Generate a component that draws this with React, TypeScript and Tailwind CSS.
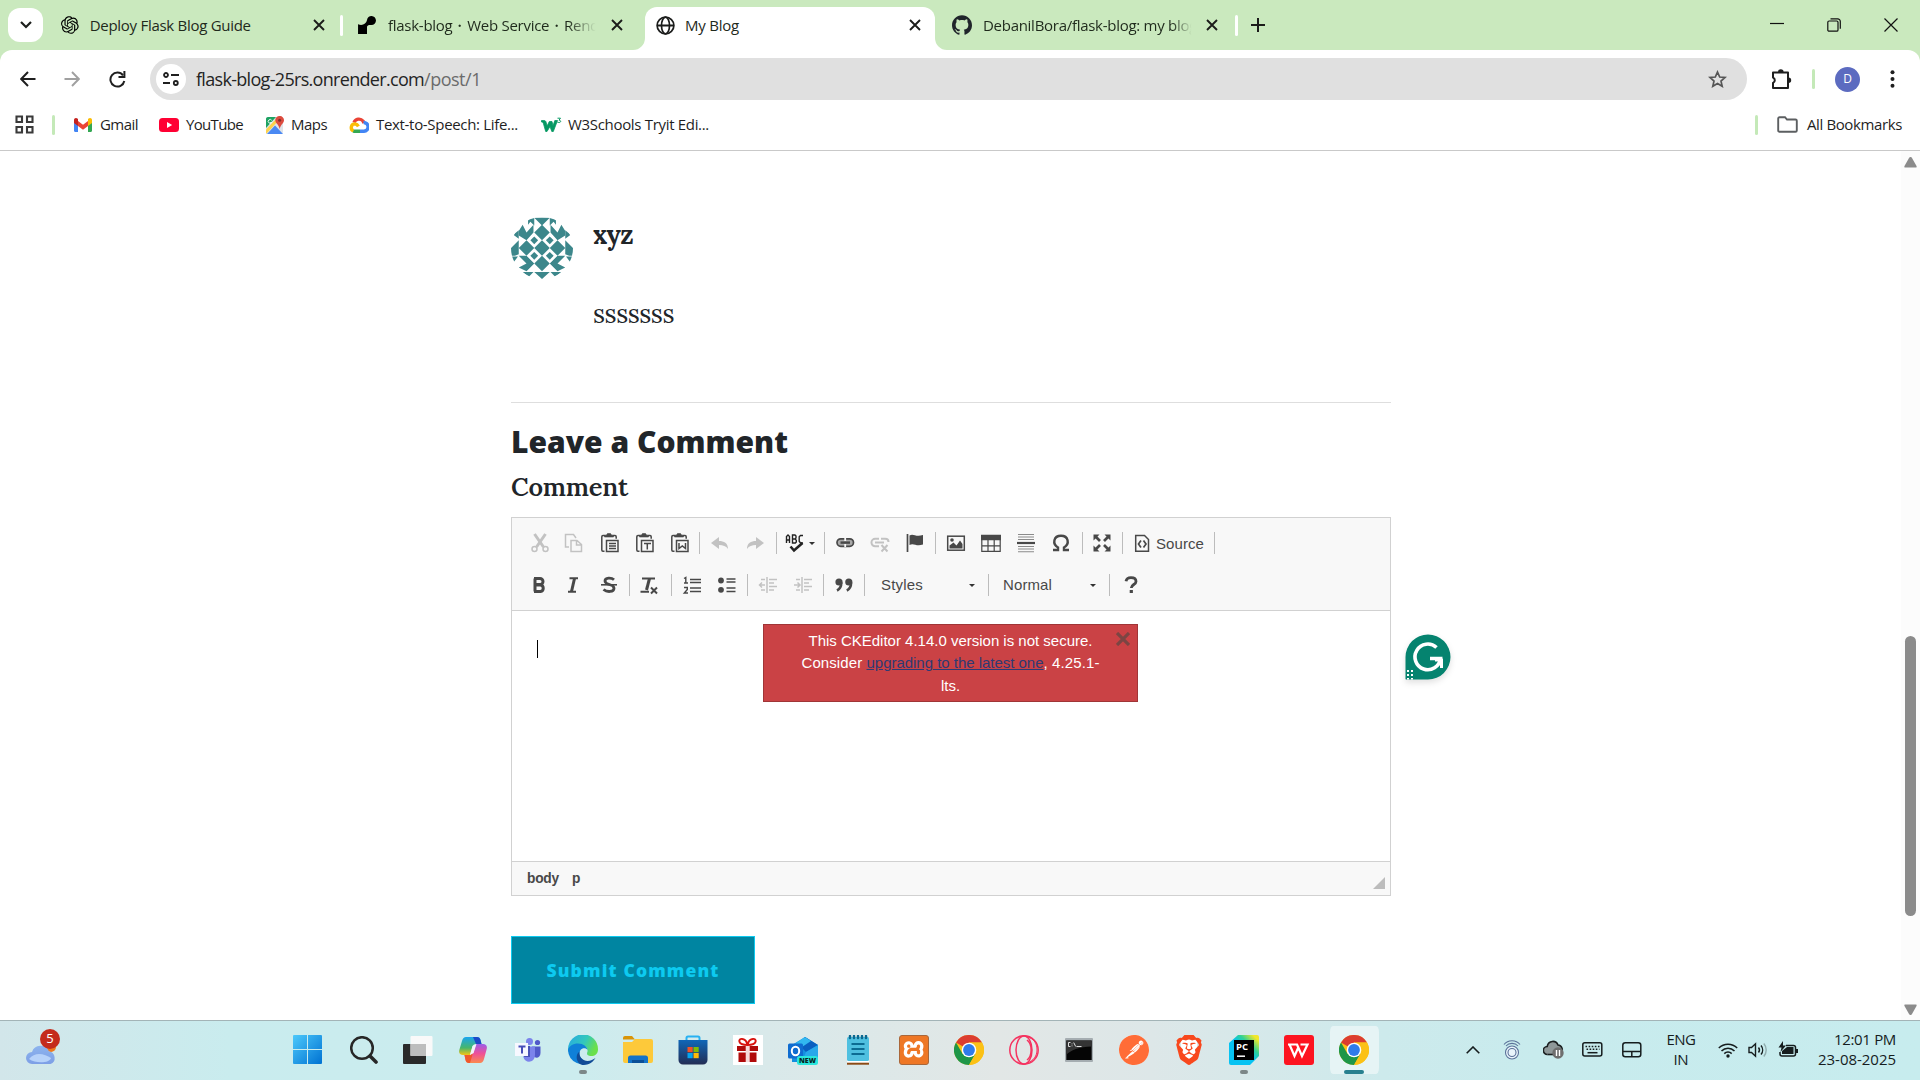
import React, { useLayoutEffect, useRef } from "react";
import { SiOpenai, SiGithub, SiRender, SiPostman, SiBrave, SiXampp } from "react-icons/si";

/* Text run spaced out to a known advance width. */
function Fit({ w, className = "", children }: { w: number; className?: string; children: string }) {
  const ref = useRef<HTMLSpanElement>(null);
  useLayoutEffect(() => {
    const el = ref.current;
    if (!el) return;
    el.style.letterSpacing = "0px";
    const natural = el.getBoundingClientRect().width;
    el.style.letterSpacing = `${(w - natural) / children.length}px`;
  }, [w, children]);
  return (
    <span ref={ref} className={"inline-block whitespace-pre " + className}>
      {children}
    </span>
  );
}

const UI = "font-['Open_Sans','Noto_Sans',sans-serif]";

function Close() {
  return (
    <svg className="h-3 w-3 shrink-0" viewBox="0 0 12 12" stroke="#1b1c1a" strokeWidth="1.9">
      <path d="M1 1l10 10M11 1L1 11" />
    </svg>
  );
}

function TabStrip() {
  return (
    <div className="flex h-[50px] w-full items-start bg-[#cae9be] text-[15px] text-[#1f2a1c]">
      <div className="mt-2 ml-2 flex h-[34px] w-[35px] items-center justify-center rounded-xl bg-white">
        <svg width="12" height="8" viewBox="0 0 12 8" fill="none" stroke="#1d1f1c" strokeWidth="2.2">
          <path d="M1 1l5 5 5-5" />
        </svg>
      </div>
      <div className="flex h-[50px] w-[300px] items-center pl-[18px]">
        <SiOpenai className="h-[18px] w-[18px] text-black" />
        <div className="ml-[11px] w-[227px]">
          <Fit w={161}>Deploy Flask Blog Guide</Fit>
        </div>
        <Close />
        <div className="ml-[15px] h-[21px] w-[3px] rounded bg-white" />
      </div>
      <div className="flex h-[50px] w-[290px] items-center pl-[15px]">
        <SiRender className="h-[18px] w-[18px] text-black" />
        <div className="ml-3 w-[212px] whitespace-nowrap [mask-image:linear-gradient(to_right,black_85%,transparent_98%)]">
          <Fit w={211}>flask-blog・Web Service・Rend</Fit>
        </div>
        <div className="ml-[11px]">
          <Close />
        </div>
      </div>
      <div className="mt-[7px] flex">
        <svg className="mt-[31px]" width="12" height="12" viewBox="0 0 12 12">
          <path d="M12 0v12H0A12 12 0 0012 0z" fill="#fff" />
        </svg>
        <div className="flex h-[43px] w-[290px] items-center rounded-t-xl bg-white pb-[7px] pl-[11px]">
          <svg width="19" height="19" viewBox="0 0 19 19" fill="none" stroke="#1b1c1b" strokeWidth="1.7">
            <circle cx="9.5" cy="9.5" r="8.4" />
            <ellipse cx="9.5" cy="9.5" rx="4" ry="8.4" />
            <path d="M1 9.5h17" strokeWidth="2" />
          </svg>
          <div className="ml-[10px] w-[224px]">
            <Fit w={54}>My Blog</Fit>
          </div>
          <Close />
        </div>
        <svg className="mt-[31px]" width="12" height="12" viewBox="0 0 12 12">
          <path d="M0 0v12h12A12 12 0 010 0z" fill="#fff" />
        </svg>
      </div>
      <div className="flex h-[50px] items-center pl-[5px]">
        <SiGithub className="h-5 w-5 text-[#20252b]" />
        <div className="ml-[11px] w-[215px] whitespace-nowrap [mask-image:linear-gradient(to_right,black_88%,transparent_97%)]">
          <Fit w={214}>DebanilBora/flask-blog: my blog</Fit>
        </div>
        <div className="ml-[8px]">
          <Close />
        </div>
        <div className="ml-[17px] h-[21px] w-[3px] rounded bg-white" />
        <svg className="ml-[13px]" width="14" height="14" viewBox="0 0 14 14" stroke="#1b1c1a" strokeWidth="2">
          <path d="M7 0v14M0 7h14" />
        </svg>
      </div>
      <div className="mr-[22px] ml-auto flex h-[50px] items-center gap-[43px]">
        <svg width="14" height="14" viewBox="0 0 14 14" stroke="#111" strokeWidth="1.2">
          <path d="M0 5.500h14" />
        </svg>
        <svg width="14" height="14" viewBox="0 0 14 14" fill="none" stroke="#111" strokeWidth="1.2">
          <rect x=".8" y="3" width="10.2" height="10.2" rx="1.3" />
          <path d="M3.5.8h7.2a2.6 2.6 0 012.6 2.6v7.3" />
        </svg>
        <svg width="14" height="14" viewBox="0 0 14 14" stroke="#111" strokeWidth="1.2">
          <path d="M.5.5l13 13M13.5.5l-13 13" />
        </svg>
      </div>
    </div>
  );
}

function Toolbar() {
  return (
    <div className="bg-[#cae9be]">
      <div className="flex h-[58px] items-center rounded-t-xl bg-white pl-5">
        <svg width="16" height="16" viewBox="0 0 16 16" fill="none" stroke="#1f1f1f" strokeWidth="2">
          <path d="M15.5 8H1.5M8 1L1.2 8 8 15" />
        </svg>
        <svg className="ml-7" width="16" height="16" viewBox="0 0 16 16" fill="none" stroke="#a0a0a0" strokeWidth="1.9">
          <path d="M.5 8h14M8 1l6.8 7L8 15" />
        </svg>
        <svg className="ml-[29px]" width="17" height="17" viewBox="0 0 17 17" fill="none" stroke="#1f1f1f" strokeWidth="2">
          <path d="M14 4.3A7 7 0 1015.3 10" />
          <path d="M15.4 0v6H9.5" />
        </svg>
        <div className="ml-[24px] flex h-[42px] w-[1597px] items-center rounded-full bg-[#e0e0e0] pl-[6px]">
          <div className="flex h-[30px] w-[30px] items-center justify-center rounded-full bg-white">
            <svg width="16" height="16" viewBox="0 0 16 16" fill="none" stroke="#1f1f1f" strokeWidth="1.8">
              <circle cx="3" cy="4" r="2" />
              <path d="M8 4h8M0 12h7" />
              <circle cx="12.8" cy="12" r="2" />
            </svg>
          </div>
          <div className="ml-[10px] flex text-[18px] text-[#242424]">
            <Fit w={228}>flask-blog-25rs.onrender.com</Fit>
            <Fit w={57} className="text-[#6b6b6b]">/post/1</Fit>
          </div>
          <svg className="mr-[20px] ml-auto" width="19" height="18" viewBox="0 0 19 18" fill="none" stroke="#555" strokeWidth="1.7">
            <path d="M9.5 2l2.2 5 5.3.5-4 3.6 1.200 5.200-4.700-2.800-4.700 2.800L6 11.100 2 7.500 7.300 7z" />
          </svg>
        </div>
        <svg className="ml-[23px]" width="22" height="22" viewBox="0 0 22 22" fill="none" stroke="#1f1f1f" strokeWidth="2">
          <path d="M3 4.500h15v15.500H3v-5a3 3 0 000-5.500z" strokeLinejoin="round" />
          <path d="M8 4a2.800 2.800 0 015.600 0zM18.500 9.500a2.700 2.700 0 010 5.400z" fill="#1f1f1f" stroke="none" />
        </svg>
        <div className="ml-[20px] h-5 w-[3px] rounded bg-[#c4e9b8]" />
        <div className="ml-[20px] flex h-[25px] w-[25px] items-center justify-center rounded-full bg-[#5c6bc0] text-[12px] text-white">D</div>
        <svg className="ml-[30px]" width="5" height="18" viewBox="0 0 5 18" fill="#1f1f1f">
          <circle cx="2.500" cy="2.200" r="2" />
          <circle cx="2.500" cy="9" r="2" />
          <circle cx="2.500" cy="15.800" r="2" />
        </svg>
      </div>
    </div>
  );
}

function Bookmarks() {
  return (
    <div className="flex h-[43px] items-center border-b border-[#c9c9c9] bg-white pb-[9px] pl-[15px] text-[15px] text-[#1f1f1f]">
      <svg width="19" height="19" viewBox="0 0 19 19" fill="none" stroke="#3a3a3a" strokeWidth="2.100">
        <path d="M1.500 1.500h5.500v5.500H1.500zM12 1.500h5.500v5.500H12zM1.500 12h5.500v5.500H1.500zM12 12h5.500v5.500H12z" />
      </svg>
      <div className="ml-[18px] h-5 w-[3px] rounded bg-[#c4e9b8]" />
      <svg className="ml-[19px]" width="18" height="14" viewBox="0 0 18 14">
        <path d="M0 2v10.800c0 .7.500 1.200 1.200 1.200H4V5z" fill="#4285f4" />
        <path d="M18 2v10.800c0 .7-.5 1.200-1.200 1.200H14V5z" fill="#34a853" />
        <path d="M4 3l5 3.800L14 3v5l-5 3.800L4 8z" fill="#ea4335" />
        <path d="M0 2C0 .2 2-.6 3.400.5L4 1v7L0 5z" fill="#c5221f" />
        <path d="M18 2c0-1.800-2-2.600-3.400-1.500L14 1v7l4-3z" fill="#fbbc04" />
      </svg>
      <Fit w={38} className="ml-2">Gmail</Fit>
      <svg className="ml-[21px]" width="20" height="14" viewBox="0 0 20 14">
        <rect width="20" height="14" rx="3.500" fill="#ff0033" />
        <path d="M8 4l5.200 3L8 10z" fill="#fff" />
      </svg>
      <Fit w={57} className="ml-[7px]">YouTube</Fit>
      <svg className="ml-[23px]" width="18" height="18" viewBox="0 0 18 18">
        <rect y="1" width="17" height="17" rx="2" fill="#dfe3e8" />
        <path d="M1 18L9 9.500l8 8.500z" fill="#4a89f3" />
        <path d="M0 13.500L12 1l2 2L0 18z" fill="#fdd24b" />
        <path d="M0 2.500A2 2 0 012 1h8L0 12z" fill="#1ea362" />
        <path d="M13.500 0A4.200 4.200 0 0118 4.300c0 3-3.500 4.400-4.300 8.700C13 8.700 9.300 7.300 9.300 4.300A4.200 4.200 0 0113.500 0z" fill="#dd4b3e" />
        <circle cx="13.600" cy="4.300" r="1.500" fill="#822f2b" />
        <path d="M5.700 4.300A1.900 1.900 0 105.700 6.500H4.200" fill="none" stroke="#fff" strokeWidth=".9" />
      </svg>
      <Fit w={36} className="ml-[7px]">Maps</Fit>
      <svg className="ml-[22px]" width="20" height="16" viewBox="0 0 20 16" fill="none" strokeWidth="3.400">
        <path d="M5 5.500A5.300 5.300 0 0114 4l1 2" stroke="#ea4335" />
        <path d="M14.500 5.500a4.400 4.400 0 01.5 8.800h-4" stroke="#4285f4" />
        <path d="M11 14.300H5.500L4 14" stroke="#34a853" />
        <path d="M4.500 13.800A3.600 3.600 0 016 6.900a5 5 0 013.400 2.400" stroke="#fbbc04" />
      </svg>
      <Fit w={142} className="ml-[7px]">Text-to-Speech: Life...</Fit>
      <svg className="ml-[23px]" width="21" height="15" viewBox="0 0 21 15">
        <path d="M.5 3.500h2.300c1.400 0 2 .7 2.300 1.700l1 3.800L8.300 4.500H11l1 4.300 1.800-5.300h2.700L12.300 14.500h-1.500L9 9.500l-3 5H4.700L2.500 6.800C2.200 5.500 1.500 5 .5 5z" fill="#059862" stroke="#059862" strokeWidth=".8" />
        <path d="M16.500 1.200h3L18 3.200c3 .3 1.800 3.200-1.600 2" fill="none" stroke="#059862" strokeWidth="1" />
      </svg>
      <Fit w={141} className="ml-[6px]">W3Schools Tryit Edi...</Fit>
      <div className="ml-auto h-5 w-[3px] rounded bg-[#c4e9b8]" />
      <svg className="ml-[19px]" width="21" height="17" viewBox="0 0 21 17" fill="none" stroke="#5c5f61" strokeWidth="1.900">
        <path d="M1.200 2.500c0-.8.500-1.300 1.300-1.300H8l2 2.300h8.500c.8 0 1.300.5 1.300 1.300v9.700c0 .8-.5 1.300-1.300 1.300h-16c-.8 0-1.300-.5-1.300-1.300z" />
      </svg>
      <Fit w={95} className="mr-[18px] ml-[9px]">All Bookmarks</Fit>
    </div>
  );
}

function Identicon() {
  const big = [[4, 2], [4, 4], [4, 6], [2, 4], [6, 4]];
  const small = [[3, 3], [5, 3], [3, 5], [5, 5]];
  return (
    <svg className="h-[62px] w-[62px] shrink-0 rounded-full" viewBox="0 0 8 8" fill="#3c878b">
      {big.map(([x, y]) => (
        <path key={`b${x}${y}`} d={`M${x} ${y - 1}l1 1-1 1-1-1z`} />
      ))}
      {small.map(([x, y]) => (
        <path key={`s${x}${y}`} d={`M${x} ${y - 0.5}l.5 .5-.5 .5-.5-.5z`} />
      ))}
      <path d="M3 .1h2L4 1.100zM3 7.100h2L4 8z" />
      <path d="M2.200 0H3v1.100L2.500 .6 2.200 1zM5.800 0H5v1.100L5.500 .6 5.800 1z" />
      <path d="M1.500 1L2 2l.9-1v1L2 3 1 2.400V1.800zM6.500 1L6 2l-.9-1v1L6 3 7 2.400V1.800z" />
      <path d="M1 1.700v1.100L.3 2.300zM7 1.700v1.100l.7-.5z" />
      <path d="M0 4L1 3v1.800L.5 5H0zM8 4L7 3v1.800l.5.2H8z" />
      <path d="M0 5.100h.9L.3 5.900zM8 5.100h-.9l.6.800z" />
      <path d="M1 5h1l1 1-1 1-1-.5L2 6zM7 5H6L5 6l1 1 1-.5L6 6z" />
      <path d="M1.500 7.100h1.400l-.6.600zM6.500 7.100H5.100l.6.600z" />
    </svg>
  );
}

function Sep({ l, r }: { l: number; r: number }) {
  return <div className="h-[22px] w-px shrink-0 bg-[#bcbcbc]" style={{ marginLeft: l, marginRight: r }} />;
}

function Ic({ dim, children, l = 0 }: { dim?: boolean; children: React.ReactNode; l?: number }) {
  return (
    <svg
      className={dim ? "shrink-0 opacity-30" : "shrink-0"}
      style={{ marginLeft: l }}
      width="20"
      height="20"
      viewBox="0 0 20 20"
      fill="none"
      stroke="#484848"
      strokeWidth="1.500"
    >
      {children}
    </svg>
  );
}

function Clipboard() {
  return (
    <>
      <path d="M5.500 2.500H3c-.9 0-1.200.5-1.200 1.200V17c0 .8.500 1.200 1.200 1.200h1.500M12.500 2.500H15c.9 0 1.200.5 1.200 1.200v2" />
      <path d="M4.500 4V2.500L6.500 2 7.500.5h3l1 1.500 2 .5V4z" fill="#484848" strokeWidth=".6" />
      <rect x="6.500" y="7.500" width="11.500" height="11" />
    </>
  );
}

function Caret() {
  return <div className="h-0 w-0 border-x-[3px] border-t-[3px] border-x-transparent border-t-[#333]" />;
}

function EditorTools() {
  return (
    <div className="h-[93px] border-b border-[#d1d1d1] bg-[#f8f8f8] pt-[14px] font-['Liberation_Sans',Arial,sans-serif] text-[15px] text-[#484848]">
      <div className="flex h-[22px] items-center">
        <Ic dim l={18}>
          <path d="M4.500 1l9 13M15.500 1l-9 13" strokeWidth="3" />
          <circle cx="4.500" cy="16" r="2.500" />
          <circle cx="15.500" cy="16" r="2.500" />
        </Ic>
        <Ic dim l={14}>
          <path d="M5 14H1.500V1.500h8L12 5M7 7.500h6l4.500 4v7H7zM12.500 7.500v4.500h5" />
        </Ic>
        <Ic l={16}>
          <Clipboard />
          <path d="M9 10.500h7M9 13h7M9 15.500h7" />
        </Ic>
        <Ic l={15}>
          <Clipboard />
          <path d="M9 10.500h7M12.300 10.500v6" />
        </Ic>
        <Ic l={15}>
          <Clipboard />
          <path d="M9 10v5.500l3.300-2.500 3.200 2.500V10" />
        </Ic>
        <Sep l={9} r={10} />
        <Ic dim>
          <path d="M1 10l8-6v4c5 0 9 2 9 8-2-3-5-4-9-4v4z" fill="#484848" stroke="none" />
        </Ic>
        <Ic dim l={15}>
          <path d="M19 10l-8-6v4c-5 0-9 2-9 8 2-3 5-4 9-4v4z" fill="#484848" stroke="none" />
        </Ic>
        <Sep l={11} r={8} />
        <Ic>
          <path d="M1.500 10V3.500L3 2l1.500 1.500V10M1.500 7h3M7.500 2v8h2.800l1-1V7.300L10 6l1-1V3l-1-1zM7.500 6H10M18 2.500h-2.500l-1.300 1.300v4.500L15.500 10H18" strokeWidth="1.400" stroke="#222" />
          <path d="M5.500 13.500l3.500 4 8.500-7.500" strokeWidth="2.600" stroke="#222" />
        </Ic>
        <div className="ml-[4px]">
          <Caret />
        </div>
        <Sep l={9} r={10} />
        <Ic>
          <rect x="2" y="5.800" width="16.500" height="7.500" rx="3.700" fill="#a9a9a9" strokeWidth="1.700" />
          <path d="M5.500 9.600h9.500" strokeWidth="2.400" />
          <path d="M10.200 5v3M10.200 11v3" strokeWidth="1.800" stroke="#f8f8f8" />
        </Ic>
        <Ic dim l={15}>
          <path d="M9 5.800H5.200a3.700 3.700 0 000 7.500H9M11 5.800h4.200c2.200 0 3.300 1.500 3.300 3.200" strokeWidth="2" />
          <path d="M5 9.500h9" strokeWidth="2" />
          <path d="M11.500 12l6 6.500M17.500 12l-6 6.500" strokeWidth="2" />
        </Ic>
        <Ic l={15}>
          <path d="M2.500 1v18" strokeWidth="1.700" />
          <path d="M4.500 2.500c4-2.500 6 2 13.500-.5v9.500c-7 2.500-9-2-13.500.5z" fill="#484848" stroke="none" />
        </Ic>
        <Sep l={10} r={10} />
        <Ic>
          <rect x="1.700" y="3.200" width="16.600" height="14" />
          <circle cx="6" cy="7" r="1.800" fill="#484848" stroke="none" />
          <path d="M3.500 15.500v-3l4-3 3 3 3.500-5 2.500 3.500v4.500z" fill="#484848" stroke="none" />
        </Ic>
        <Ic l={15}>
          <path d="M.8 2.500h18.400v15.800H.8zM.8 12.800h18.400M7 6v12M13.200 6v12" strokeWidth="1.200" />
          <path d="M.8 2.500h18.400v4H.8z" fill="#484848" />
        </Ic>
        <Ic l={15}>
          <path d="M2 1.500h16M2 4h16M2 6.500h16M2 13.500h16M2 16h16M2 18.800h16" strokeWidth="1.100" stroke="#8a8a8a" />
          <path d="M1 10h18" strokeWidth="2.200" />
        </Ic>
        <Ic l={15}>
          <path d="M2 17h5v-2.500C1 11 2.500 2.800 10 2.800s9 8.200 3 11.700V17h5" strokeWidth="2.400" />
        </Ic>
        <Sep l={11} r={9} />
        <Ic>
          <path d="M1.500 7.500v-6h6zM12.500 1.500h6v6zM1.500 12.500v6h6zM18.500 12.500v6h-6z" fill="#484848" stroke="none" />
          <path d="M3 3l5 5M17 3l-5 5M3 17l5-5M17 17l-5-5" strokeWidth="2.700" />
        </Ic>
        <Sep l={10} r={9} />
        <Ic>
          <path d="M3.700 2.500h8.800l4 4v11.700H3.700z" />
          <path d="M9 7.500L6.500 11 9 14.500M11.500 7.500L14 11l-2.500 3.500" strokeWidth="1.700" />
        </Ic>
        <Fit w={48} className="ml-[4px] pt-[2px]">Source</Fit>
        <Sep l={10} r={0} />
      </div>
      <div className="mt-[20px] flex h-[22px] items-center">
        <Ic l={17}>
          <path d="M6 3.500v13M5 3.500h6a3 3 0 010 6H6M6 10h5.500a3.300 3.300 0 010 6.500H5" strokeWidth="3" />
        </Ic>
        <Ic l={14}>
          <path d="M6.500 3.200H15M5 16.800h8" strokeWidth="2" />
          <path d="M11.500 3.500l-3 13" strokeWidth="3" />
        </Ic>
        <Ic l={16}>
          <path d="M15 4.800C12.500 2.500 6 2.300 6 6c0 4.500 9 2.500 9 7.200 0 4-7 4.200-10.500 1.300" strokeWidth="2.800" />
          <path d="M2 9.800h16" strokeWidth="1.600" />
        </Ic>
        <Sep l={10} r={9} />
        <Ic>
          <path d="M3 3.500h13M1.500 16.800H10" strokeWidth="2" />
          <path d="M10.500 3.500L7.500 15" strokeWidth="3" />
          <path d="M12 12.500l6 6M18 12.500l-6 6" strokeWidth="2" />
        </Ic>
        <Sep l={12} r={10} />
        <Ic>
          <path d="M8 4.500h11M8 7.500h11M8 13h11M8 16.500h11" strokeWidth="1.300" />
          <path d="M2 3.500l1.800-1V8M2 8h4M2 12.500h3.300v2L2.300 18H6" strokeWidth="1.400" />
        </Ic>
        <Ic l={15}>
          <path d="M9.500 4h9M9.500 7h9M9.500 13h9M9.500 16.500h9" strokeWidth="1.400" />
          <circle cx="4" cy="5.500" r="2.900" fill="#484848" stroke="none" />
          <circle cx="4" cy="14.800" r="2.900" fill="#484848" stroke="none" />
        </Ic>
        <Sep l={10} r={10} />
        <Ic dim>
          <path d="M7 10H1.500M4 7.500L1.500 10 4 12.500M9 2v16M11 4.500h8M11 8h5M11 11.500h8M11 15h5M3 4.500h4M3 15h4" />
        </Ic>
        <Ic dim l={15}>
          <path d="M1 10h6M4.500 7.500L7 10l-2.500 2.500M9 2v16M11 4.500h8M11 8h5M11 11.500h8M11 15h5M3 4.500h4M3 15h4" />
        </Ic>
        <Sep l={10} r={10} />
        <Ic>
          <circle cx="5" cy="7" r="3.600" fill="#484848" stroke="none" />
          <circle cx="14.800" cy="7" r="3.600" fill="#484848" stroke="none" />
          <path d="M7.300 7.500C7.300 11.500 6 14 3 15.500M17.100 7.500c0 4-1.300 6.500-4.300 8" strokeWidth="2.600" />
        </Ic>
        <Sep l={10} r={16} />
        <Fit w={42}>Styles</Fit>
        <div className="ml-[46px]">
          <Caret />
        </div>
        <Sep l={13} r={14} />
        <Fit w={49}>Normal</Fit>
        <div className="ml-[38px]">
          <Caret />
        </div>
        <Sep l={13} r={11} />
        <Ic>
          <path d="M5 6.200C5.500 3.500 7.500 2.600 10 2.600c3 0 5 1.400 5 3.800 0 3.200-4.700 3-4.700 6.600" strokeWidth="2.800" />
          <path d="M8.700 15h3.200v3H8.700z" fill="#484848" stroke="none" />
        </Ic>
      </div>
    </div>
  );
}

function Editor() {
  return (
    <div className="mt-[13px] h-[379px] w-[880px] border border-[#d1d1d1] bg-white">
      <EditorTools />
      <div className="relative h-[250px] pt-[29px] pl-[25px]">
        <div className="h-[18px] w-px bg-black" />
        <div className="absolute top-[13px] left-[251px] h-[78px] w-[375px] border border-[#a03537] bg-[#ca4245] pt-[5px] text-center font-['Liberation_Sans',Arial,sans-serif] text-[15px] leading-[22.500px] text-white">
          <div className="h-[22px]">
            <Fit w={284}>This CKEditor 4.14.0 version is not secure.</Fit>
          </div>
          <div className="flex justify-center">
            <Fit w={65}>Consider </Fit>
            <Fit w={177} className="text-[#2f3a73] underline">upgrading to the latest one</Fit>
            <Fit w={56}>, 4.25.1-</Fit>
          </div>
          <div>lts.</div>
          <svg className="absolute top-[7px] right-[7px]" width="14" height="14" viewBox="0 0 14 14" stroke="#7b4543" strokeWidth="3.200">
            <path d="M1 1l12 12M13 1L1 13" />
          </svg>
        </div>
        <div className="absolute top-[22px] left-[892px]">
          <svg className="drop-shadow-md" width="48" height="48" viewBox="0 0 48 48">
            <path d="M1.500 46V24a22.500 22.500 0 1122.500 22.500H2a1 1 0 01-.5-.5z" fill="#05836f" />
            <path d="M32.500 14.500A12.800 12.800 0 1036.500 25.500H26" fill="none" stroke="#fff" strokeWidth="3.600" />
            <path d="M29 14.500h6v-6" fill="none" />
            <path d="M31 27h6.500v8" fill="none" stroke="#fff" strokeWidth="3" />
            <path d="M3 37h2v2H3zM7 37h2v2H7zM3 41h2v2H3zM7 41h2v2H7zM3 45h2v1.500H3zM7 45h2v1.500H7z" fill="#fff" />
          </svg>
        </div>
      </div>
      <div className="flex h-[34px] items-center border-t border-[#d1d1d1] bg-[#f8f8f8] pl-[15px] font-['Liberation_Sans',Arial,sans-serif] text-[13.750px] font-bold text-[#484848]">
        <Fit w={32} className="pt-[2px]">body</Fit>
        <span className="ml-[13px] pt-[2px]">p</span>
        <svg className="mt-[9px] mr-[5px] ml-auto" width="12" height="12">
          <path d="M12 0v12H0z" fill="#bcbcbc" />
        </svg>
      </div>
    </div>
  );
}

const SERIF = "font-['Lora','Liberation_Serif',serif]";

function Page() {
  return (
    <div className="flex h-[869px] bg-white text-[#212529]">
      <div className="ml-[511px] w-[880px] pt-[66px]">
        <div className="flex h-[186px] border-b border-[#dedede]">
          <Identicon />
          <div className={"ml-5 " + SERIF}>
            <div className="text-[26px] leading-[36px] font-bold">
              <Fit w={40}>xyz</Fit>
            </div>
            <div className="mt-[43px] text-[26px] leading-[36px]">
              <Fit w={81}>sssssss</Fit>
            </div>
          </div>
        </div>
        <div className="mt-[18px] text-[30px] leading-[42px] font-extrabold">
          <Fit w={277}>Leave a Comment</Fit>
        </div>
        <div className={"mt-[7px] text-[25.500px] leading-[34px] font-semibold " + SERIF}>
          <Fit w={117}>Comment</Fit>
        </div>
        <Editor />
        <button className="mt-10 flex h-[68px] w-[244px] items-center justify-center border border-[#0dcaf0] bg-[#0085a1] pt-px text-[17.500px] font-extrabold text-[#0dcaf0]">
          <Fit w={173}>Submit Comment</Fit>
        </button>
      </div>
      <div className="ml-auto flex h-full w-[19px] flex-col items-center bg-[#fcfcfc]">
        <svg className="mt-[6px]" width="13" height="11" viewBox="0 0 13 11" fill="#8b8b8b">
          <path d="M6.500 0c.8 0 1 .4 1.500 1l4.500 8c.5 1 0 1.500-.7 1.500H1.200C.5 10.500 0 10 .5 9L5 1c.4-.6.800-1 1.500-1z" />
        </svg>
        <div className="mt-[468px] h-[280px] w-[11px] rounded-full bg-[#8b8b8b]" />
        <svg className="mt-[88px]" width="13" height="11" viewBox="0 0 13 11" fill="#8b8b8b">
          <path d="M6.500 11c.8 0 1-.4 1.500-1l4.500-8c.5-1 0-1.500-.7-1.500H1.200C.5.500 0 1 .5 2L5 10c.4.600.8 1 1.500 1z" />
        </svg>
      </div>
    </div>
  );
}

function Chrome() {
  return (
    <svg width="30" height="30" viewBox="0 0 30 30">
      <circle cx="15" cy="15" r="15" fill="#fbc116" />
      <path d="M15 15L2 7.500A15 15 0 0128 7.500H15z" fill="#dc3d30" />
      <path d="M2 7.500A15 15 0 0015 30l6.500-11.300L8.500 18.700z" fill="#1e9648" />
      <path d="M15 30a15 15 0 0013-22.500H15l6.500 11.200z" fill="#fbc116" />
      <circle cx="15" cy="15" r="7.300" fill="#fff" />
      <circle cx="15" cy="15" r="5.900" fill="#2f7bea" />
    </svg>
  );
}

const APPS: { id: string; node: React.ReactNode; mark?: "dot" | "bar" }[] = [
  {
    id: "start",
    node: (
      <svg width="29" height="29" viewBox="0 0 29 29">
        <defs>
          <linearGradient id="win" x1="0" y1="0" x2="1" y2="1">
            <stop offset="0" stopColor="#4cc9fb" />
            <stop offset="1" stopColor="#0072d2" />
          </linearGradient>
        </defs>
        <path d="M1 0h13v14H0V1a1 1 0 011-1zM15 0h13a1 1 0 011 1v13H15zM0 15h14v14H1a1 1 0 01-1-1zM15 15h14v13a1 1 0 01-1 1H15z" fill="url(#win)" />
      </svg>
    ),
  },
  {
    id: "search",
    node: (
      <svg className="ml-[2px]" width="28" height="28" viewBox="0 0 28 28" fill="none" stroke="#272727" strokeLinecap="round">
        <circle cx="12" cy="12" r="10.800" strokeWidth="2.500" />
        <path d="M20 20l6 6" strokeWidth="3.600" />
      </svg>
    ),
  },
  {
    id: "taskview",
    node: (
      <svg width="30" height="28" viewBox="0 0 30 28">
        <rect y="8" width="23" height="20" rx="1" fill="#2a2a2a" />
        <rect x="7.500" width="22" height="20" rx="1" fill="#f9f9f9" />
        <path d="M7.500 8H23v12H7.500z" fill="#bdbdbd" />
      </svg>
    ),
  },
  {
    id: "copilot",
    node: (
      <svg width="28" height="26" viewBox="0 0 28 26">
        <defs>
          <linearGradient id="cpA" x1="0" y1="0" x2="0" y2="1">
            <stop offset="0" stopColor="#1aa5f0" />
            <stop offset=".6" stopColor="#47b66b" />
            <stop offset="1" stopColor="#f4c414" />
          </linearGradient>
          <linearGradient id="cpB" x1="0" y1="0" x2="0" y2="1">
            <stop offset="0" stopColor="#9b5de8" />
            <stop offset=".5" stopColor="#ee5098" />
            <stop offset="1" stopColor="#fb8a4e" />
          </linearGradient>
        </defs>
        <path d="M7 0h11c2 0 3 1 3.500 3l1 4H17c-2 0-3 1-3.500 2.500L11 18H4c-3 0-4.500-2-3.700-5L3 4c.7-2.500 2-4 4-4z" fill="url(#cpA)" />
        <path d="M14 0h4c2 0 3 1 3.500 3l1 4H17z" fill="#1b49c8" />
        <path d="M21 26H10c-2 0-3-1-3.500-3l-1-5H11c2 0 3-1 3.500-2.500L17 7h7c3 0 4.500 2 3.700 5L25 22c-.7 2.500-2 4-4 4z" fill="url(#cpB)" />
        <path d="M5.500 18H11l3-2-3 10h-1c-2 0-3-1-3.500-3z" fill="#f0582b" />
        <path d="M13.500 9l4-2-3 9-3.500 2z" fill="#f3f3fa" />
      </svg>
    ),
  },
  {
    id: "teams",
    node: (
      <svg width="26" height="24" viewBox="0 0 26 24">
        <circle cx="14.500" cy="3.500" r="3.500" fill="#7b83eb" />
        <circle cx="22.500" cy="4.500" r="2.600" fill="#5059c9" />
        <path d="M17 8.500h8.500v6.500c0 5-5 6-7 3z" fill="#5059c9" />
        <path d="M8 8.500h12v8c0 9-10 9-11.500 3z" fill="#7b83eb" />
        <path d="M12 8h3v11H9z" fill="#4a53b8" />
        <path d="M0 5h13v13H0z" fill="#f7f8ff" />
        <path d="M3.500 8.500h7M7 8.500v7" stroke="#464eb8" strokeWidth="2" />
      </svg>
    ),
  },
  {
    id: "edge",
    mark: "dot",
    node: (
      <svg width="30" height="30" viewBox="0 0 30 30">
        <defs>
          <linearGradient id="edA" x1="0" y1="0" x2="1" y2=".4">
            <stop offset="0" stopColor="#26a8e6" />
            <stop offset=".6" stopColor="#33c8bb" />
            <stop offset="1" stopColor="#6be04a" />
          </linearGradient>
        </defs>
        <path d="M0 14A15 15 0 0130 14.500c0 5-4 7-8 6.500-4-.5-3-3-2.500-4.500.5-3-2-6-6-6-6 0-11 3-13.500 7z" fill="url(#edA)" />
        <path d="M0 15C1 11 5 8.500 10 8.500c5.500 0 9 3 9.500 6.500-1-2-5-2.500-7 0-2 3-1 8 3 10.500 3 2 7 1.500 9 .5A15 15 0 010 15z" fill="#0f80d8" />
        <path d="M11.500 16.500c-1 5 3 9.500 8 9.500 3 0 6-1.500 8-3-3 5-8 7.200-13 7-6-1-8-10-3-13.500z" fill="#114b96" />
      </svg>
    ),
  },
  {
    id: "files",
    node: (
      <svg width="30" height="27" viewBox="0 0 30 27">
        <path d="M0 2a2 2 0 012-2h7l3 3.500H0z" fill="#d99407" />
        <path d="M0 6h9l3-3h16a2 2 0 012 2v20a2 2 0 01-2 2H2a2 2 0 01-2-2z" fill="#fdc93a" />
        <path d="M5 27v-5a2.500 2.500 0 012.500-2.500h15A2.500 2.500 0 0125 22v5z" fill="#1373c9" />
        <path d="M9 27v-3h12v3z" fill="#0b4f97" />
      </svg>
    ),
  },
  {
    id: "store",
    node: (
      <svg width="30" height="30" viewBox="0 0 30 30">
        <defs>
          <linearGradient id="st" x1="0" y1="0" x2="0" y2="1">
            <stop offset="0" stopColor="#1067b8" />
            <stop offset="1" stopColor="#232d54" />
          </linearGradient>
        </defs>
        <path d="M8.500 6V3a1.500 1.500 0 011.500-1.500h10A1.500 1.500 0 0121.500 3v3" fill="none" stroke="#27b1f2" strokeWidth="2" />
        <path d="M.5 5h29v20a4.500 4.500 0 01-4.500 4.500H5A4.500 4.500 0 01.5 25z" fill="url(#st)" />
        <path d="M9.500 12h5.200v5.200H9.500z" fill="#f35325" />
        <path d="M15.500 12h5.200v5.200h-5.200z" fill="#81bc06" />
        <path d="M9.500 18h5.200v5.200H9.500z" fill="#05a6f0" />
        <path d="M15.500 18h5.200v5.200h-5.200z" fill="#ffba08" />
      </svg>
    ),
  },
  {
    id: "gift",
    node: (
      <svg width="30" height="30" viewBox="0 0 30 30">
        <path d="M0 0h30v30H0z" fill="#fff" />
        <path d="M4 11h21v5H4zM5.500 17.500h18V27h-18z" fill="#b00b0b" />
        <path d="M12.700 11h4v16h-4z" fill="#f6dada" />
        <path d="M14.500 10C4 10 5 3 9.500 4c3 .5 4.500 3.500 5 6 .5-2.500 2-5.500 5-6 4.500-1 5.500 6-5 6z" fill="none" stroke="#d8130f" strokeWidth="1.900" />
      </svg>
    ),
  },
  {
    id: "outlook",
    node: (
      <svg width="30" height="30" viewBox="0 0 30 30">
        <path d="M4 10L17 2l13 8v15l-5 2H4z" fill="#1490df" />
        <path d="M17 2l13 8-12 7-8-8z" fill="#0a5fc0" />
        <path d="M17 2l6 4-12 8-6-4z" fill="#32b8f0" />
        <path d="M30 10v14H15l3-7z" fill="#28a8ea" />
        <rect y="8.500" width="15" height="15" rx="1.500" fill="#0f6cd0" />
        <ellipse cx="7.500" cy="16" rx="3.700" ry="4.200" fill="none" stroke="#fff" strokeWidth="2" />
        <rect x="9" y="21" width="21" height="9" rx="2.500" fill="#2ae6dc" />
        <text x="19.500" y="28.300" textAnchor="middle" fontFamily="Open Sans" fontWeight="800" fontSize="7" fill="#062626">NEW</text>
      </svg>
    ),
  },
  {
    id: "notes",
    node: (
      <svg width="22" height="30" viewBox="0 0 22 30">
        <rect y="25" width="22" height="3" fill="#fff" />
        <rect y="27.700" width="22" height="2" fill="#8a4b16" />
        <rect y="2" width="22" height="24" rx="1.500" fill="#4fc0e0" />
        <path d="M4.500 9h13M4.500 14h13M4.500 19h13" stroke="#0c6c93" strokeWidth="1.800" />
        <path d="M3 1v2M7 1v2M11 1v2M15 1v2M19 1v2" stroke="#0b6890" strokeWidth="2.500" strokeLinecap="round" />
      </svg>
    ),
  },
  {
    id: "xampp",
    node: (
      <div className="flex h-[30px] w-[30px] items-center justify-center rounded-[3px] border border-[#a9673a] bg-[#ee7725]">
        <div className="flex h-[22px] w-[22px] items-center justify-center overflow-hidden bg-white">
          <SiXampp className="h-[27px] w-[27px] shrink-0 text-[#ee7725]" />
        </div>
      </div>
    ),
  },
  { id: "chrome", node: <Chrome /> },
  {
    id: "opera",
    node: (
      <svg width="30" height="30" viewBox="0 0 30 30" fill="none" stroke="#f5325f" strokeWidth="1.500">
        <circle cx="15" cy="15" r="14.200" />
        <ellipse cx="15" cy="15" rx="8" ry="14" />
        <path d="M18 5c5.500 4 5.500 16 0 20" />
        <path d="M17 1.500c9 2 11 8 11 13.500s-3 11-11 13.500" strokeWidth="1" />
      </svg>
    ),
  },
  {
    id: "terminal",
    node: (
      <svg width="28" height="24" viewBox="0 0 28 24">
        <rect width="28" height="24" rx="1" fill="#a5adb1" />
        <rect x="1.300" y="2.500" width="25.400" height="19.500" fill="#050505" />
        <path d="M1.300 2.500h25.400v6C15 9 5 12 1.300 17z" fill="#343434" />
        <path d="M5.500 4.500H3.500v4h2M7 5.500v.8M7 7.500v.8M8.700 4.500l2 4M11.500 8.500h5" stroke="#ddd" strokeWidth="1" fill="none" />
      </svg>
    ),
  },
  {
    id: "postman",
    node: (
      <div className="rounded-full bg-white">
        <SiPostman className="h-[30px] w-[30px] text-[#ff6c37]" />
      </div>
    ),
  },
  {
    id: "brave",
    node: (
      <div className="bg-[linear-gradient(#fff,#fff)] bg-[length:16px_19px] bg-center bg-no-repeat">
        <SiBrave className="h-[30px] w-[30px] text-[#f8481d]" />
      </div>
    ),
  },
  {
    id: "pycharm",
    mark: "dot",
    node: (
      <svg width="30" height="30" viewBox="0 0 30 30">
        <defs>
          <linearGradient id="pc" x1="0" y1="1" x2="1" y2="0">
            <stop offset=".5" stopColor="#07c3f2" />
            <stop offset=".68" stopColor="#2ed196" />
            <stop offset=".9" stopColor="#f2e72a" />
          </linearGradient>
        </defs>
        <path d="M9 0h19a2 2 0 012 2v19l-9 9H2a2 2 0 01-2-2V8z" fill="url(#pc)" />
        <path d="M5 5h20v20H5z" fill="#000" />
        <text x="7" y="15.200" fontFamily="Open Sans" fontWeight="700" fontSize="9.500" fill="#fff">PC</text>
        <path d="M8 21.200h8" stroke="#fff" strokeWidth="1.500" />
      </svg>
    ),
  },
  {
    id: "wps",
    node: (
      <svg width="30" height="30" viewBox="0 0 30 30" fill="none">
        <rect width="30" height="30" rx="3" fill="#fd1420" />
        <path d="M4 9.500h9l2.500 6M5.500 9.500l5 11.500 4-9M13 9.500l5 11.500 5.500-11.500h-7" stroke="#fff" strokeWidth="2.200" />
      </svg>
    ),
  },
  { id: "active", mark: "bar", node: <Chrome /> },
];

function Taskbar() {
  return (
    <div className="flex h-[60px] items-center border-t border-[#a3b4b7] bg-[linear-gradient(90deg,#d2e6ea_0%,#c9ecee_12%,#ccecee_30%,#d9e9ea_40%,#e2e7e6_52%,#dde7e8_60%,#cdeaec_72%,#c8ebed_80%,#c7ecee_100%)] pb-[2px] text-[#161d1e]">
      <div className="relative ml-[26px] h-[44px] w-[36px]">
        <svg className="absolute top-[16px] left-0" width="31" height="21" viewBox="0 0 31 21">
          <defs>
            <linearGradient id="cl" x1="0" y1="0" x2="0" y2="1">
              <stop offset="0" stopColor="#8db4ee" />
              <stop offset="1" stopColor="#7d9fe6" />
            </linearGradient>
          </defs>
          <circle cx="25" cy="3" r="5" fill="#ee7a1f" />
          <path d="M6 20a6 6 0 010-12A9 9 0 0123 7.500 6.500 6.500 0 0124.500 20z" fill="url(#cl)" />
          <path d="M3 15c6-8 16-5 22-1-1 5-15 6-22 1z" fill="#b6d2fa" />
        </svg>
        <div className="absolute top-px left-[14px] flex h-5 w-5 items-center justify-center rounded-full bg-[#c42b1c] text-[13px] text-white">5</div>
      </div>
      <div className="ml-[218px] flex">
        {APPS.map((a) => (
          <div
            key={a.id}
            className={
              "relative flex h-[48px] w-[55.1px] items-center justify-center " +
              (a.mark === "bar" ? "rounded-md bg-[#e6f4f5] bg-clip-content px-[3px] " : "")
            }
          >
            {a.node}
            {a.mark === "dot" && <div className="absolute bottom-0 h-1 w-2 rounded-full bg-[#7c8788]" />}
            {a.mark === "bar" && <div className="absolute bottom-0 h-1 w-5 rounded-full bg-[#28808f]" />}
          </div>
        ))}
      </div>
      <svg className="ml-[84px]" width="14" height="8" viewBox="0 0 14 8" fill="none" stroke="#161d1e" strokeWidth="1.600">
        <path d="M.7 7.300L7 1l6.300 6.300" />
      </svg>
      <svg className="ml-[23px]" width="18" height="20" viewBox="0 0 18 20" fill="none" stroke="#5b7199" strokeWidth="1.100">
        <circle cx="9" cy="12.500" r="6.500" fill="#e9f4fb" />
        <circle cx="9" cy="12.500" r="4" />
        <path d="M1 4.500c4-5 12-5 16 0M3 6c3-3.500 9-3.500 12 0" />
      </svg>
      <svg className="ml-[22px]" width="21" height="19" viewBox="0 0 21 19">
        <path d="M4.500 14.500a4 4 0 01-.3-8C5.500 0 13 0 15 5c4 .3 5.500 5 3 8" fill="#8f9899" stroke="#1b1f20" strokeWidth="1.600" />
        <path d="M4.500 14.500H12" stroke="#1b1f20" strokeWidth="1.600" />
        <circle cx="15" cy="13" r="5.700" fill="#6e6e6e" />
        <path d="M13.500 10v6M16.500 10v6" stroke="#fff" strokeWidth="1.400" />
      </svg>
      <svg className="ml-[18px]" width="21" height="15" viewBox="0 0 21 15" fill="none" stroke="#161d1e" strokeWidth="1.500">
        <rect x=".8" y=".8" width="19" height="13.200" rx="2" />
        <path d="M3.500 4.500h14M4.500 7.300h13" strokeDasharray="1.600 1.500" />
        <path d="M5.500 10.700h10" />
      </svg>
      <svg className="ml-[19px]" width="20" height="16" viewBox="0 0 20 16" fill="none" stroke="#161d1e" strokeWidth="1.500">
        <rect x=".8" y=".8" width="18" height="14" rx="2.500" />
        <path d="M1 9.500h18M9.800 9.500V15" />
      </svg>
      <div className="ml-[24px] flex w-[30px] flex-col items-center pb-px text-[15px] leading-5">
        <Fit w={29}>ENG</Fit>
        <Fit w={15}>IN</Fit>
      </div>
      <svg className="ml-[22px]" width="20" height="16" viewBox="0 0 20 16" fill="none" stroke="#161d1e" strokeWidth="1.500">
        <path d="M.8 6a13 13 0 0118.400 0M3.500 9a9 9 0 0113 0M6.300 11.600a5.200 5.200 0 017.400 0" />
        <circle cx="10" cy="14" r="1.700" fill="#161d1e" stroke="none" />
      </svg>
      <svg className="ml-[10px]" width="20" height="16" viewBox="0 0 20 16" fill="none" stroke="#161d1e" strokeWidth="1.400">
        <path d="M1 5.500h2.500l4-3.700v12.400l-4-3.700H1z" />
        <path d="M10.500 5.500a4 4 0 010 5M13 3.500a7 7 0 010 9" />
        <path d="M15.800 1.500a10 10 0 010 13" opacity=".3" />
      </svg>
      <svg className="ml-[10px]" width="21" height="17" viewBox="0 0 21 17" fill="none" stroke="#161d1e" strokeWidth="1.500">
        <path d="M8 4.500h7.500c1 0 2 .7 2 2v6.500c0 1-1 2-2 2H4c-1 0-2-1-2-2v-2" />
        <path d="M4 13V10l5-4h6.500v7H4z" fill="#161d1e" stroke="none" />
        <path d="M5 0L.5 6.500h3L2.500 11 8 4.500H5z" fill="#161d1e" stroke="none" />
        <path d="M18.500 8v4" strokeWidth="3" />
      </svg>
      <div className="mr-[24px] ml-auto flex flex-col items-end pb-px text-[15px] leading-5">
        <Fit w={62}>12:01 PM</Fit>
        <Fit w={78}>23-08-2025</Fit>
      </div>
    </div>
  );
}

export default function App() {
  return (
    <div className={"h-[1080px] w-[1920px] overflow-hidden " + UI}>
      <TabStrip />
      <Toolbar />
      <Bookmarks />
      <Page />
      <Taskbar />
    </div>
  );
}
